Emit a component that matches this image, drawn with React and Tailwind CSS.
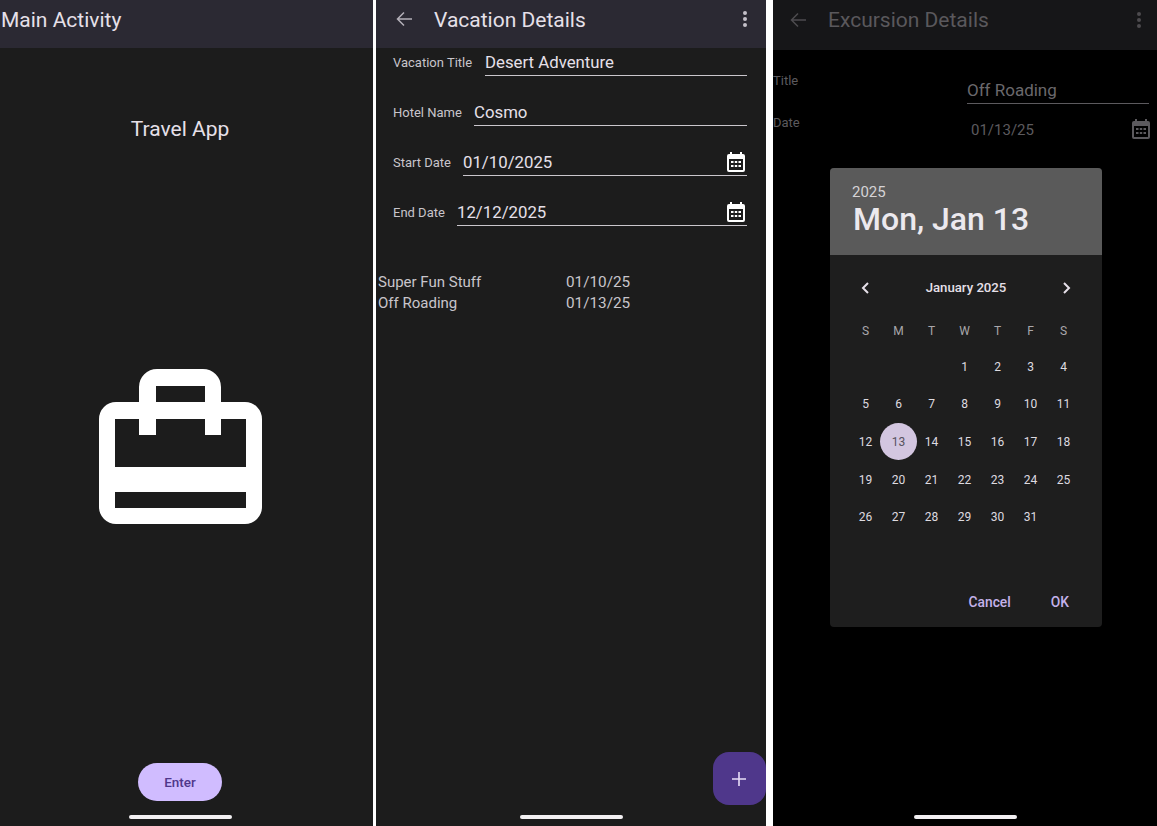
import React from "react";

const font = { fontFamily: "Roboto, sans-serif" };

function Briefcase() {
  return (
    <svg width="164" height="156" viewBox="0 0 164 156" className="block">
      <path
        fillRule="evenodd"
        fill="#ffffff"
        d="M58 0H104A18 18 0 0 1 122 18V33H146A17 17 0 0 1 163 50V138A17 17 0 0 1 146 155H17A17 17 0 0 1 0 138V50A17 17 0 0 1 17 33H40V18A18 18 0 0 1 58 0ZM57 17V33H106V17ZM16 50V98H147V50H122V66H106V50H57V66H40V50ZM16 123V139H147V123Z"
      />
    </svg>
  );
}

function CalendarIcon({ color = "#ffffff", className = "" }) {
  return (
    <svg width="18" height="20" viewBox="0 0 18 20" className={className}>
      <path
        fill={color}
        fillRule="evenodd"
        d="M3 0H5V2H13V0H15V2H16A2 2 0 0 1 18 4V18A2 2 0 0 1 16 20H2A2 2 0 0 1 0 18V4A2 2 0 0 1 2 2H3ZM2 7V18H16V7ZM4 9H6.500V11H4ZM7.800 9H10.200V11H7.800ZM11.500 9H14V11H11.500ZM4 13H6.500V15H4ZM7.800 13H10.200V15H7.800ZM11.500 13H14V15H11.500Z"
      />
    </svg>
  );
}

function BackArrow({ color }) {
  return (
    <svg width="16" height="16" viewBox="0 0 16 16" className="block">
      <path d="M16 8H2M8 1.500L1.500 8L8 14.500" fill="none" stroke={color} strokeWidth="1.500" />
    </svg>
  );
}

function Dots({ color }) {
  return (
    <svg width="4" height="16" viewBox="0 0 4 16" className="block">
      <circle cx="2" cy="2" r="2" fill={color} />
      <circle cx="2" cy="8" r="2" fill={color} />
      <circle cx="2" cy="14" r="2" fill={color} />
    </svg>
  );
}

function HomeBar() {
  return <div className="h-[4px] w-[103px] rounded-full bg-[#f2f0f2]" />;
}

function Field({ label, value, labelW, top, icon }) {
  return (
    <div className={`flex items-start pl-[17px] pr-[19px] ${top}`}>
      <span className={`text-[13px] leading-[30px] text-[#c8c5cb] shrink-0 ${labelW}`}>{label}</span>
      <div className="flex-1 h-[28px] border-b border-[#cac6cc] flex items-center justify-between">
        <span className="text-[16.800px] leading-[26px] text-[#e6e0e9]">{value}</span>
        {icon && <CalendarIcon className="mr-[2px]" />}
      </div>
    </div>
  );
}

const rows = [
  ["", "", "", "1", "2", "3", "4"],
  ["5", "6", "7", "8", "9", "10", "11"],
  ["12", "13", "14", "15", "16", "17", "18"],
  ["19", "20", "21", "22", "23", "24", "25"],
  ["26", "27", "28", "29", "30", "31", ""],
];

export default function App() {
  return (
    <div className="flex w-[1157px] h-[826px] overflow-hidden bg-white" style={font}>
      {/* Panel 1 */}
      <section className="w-[373px] h-full bg-[#1c1c1c] flex flex-col items-center">
        <header className="w-full h-[48px] bg-[#2b2933] pl-[1px] pb-[8px] flex items-center shrink-0">
          <span className="text-[21px] leading-[40px] text-[#e6e0e9]">Main Activity</span>
        </header>
        <h1 className="mt-[66px] text-[21px] leading-[30px] text-[#e6e0e9] font-normal ml-[-13px]">Travel App</h1>
        <div className="mt-[225px] ml-[-12px]">
          <Briefcase />
        </div>
        <button className="mt-[238px] ml-[-13px] w-[84px] h-[38px] rounded-full bg-[#d0bcff] text-[13.500px] font-medium text-[#4f378b]">
          Enter
        </button>
        <div className="mt-[14px] ml-[-13px]">
          <HomeBar />
        </div>
      </section>

      <div className="w-[3px]" />

      {/* Panel 2 */}
      <section className="w-[390px] h-full bg-[#1c1c1c] flex flex-col">
        <header className="h-[48px] bg-[#2b2933] flex items-center pl-[20px] pr-[19px] pb-[8px] shrink-0">
          <span className="mb-[3px]">
            <BackArrow color="#b4b0b9" />
          </span>
          <span className="ml-[22px] text-[21px] leading-[40px] text-[#e6e0e9]">Vacation Details</span>
          <span className="ml-auto mb-[3px]">
            <Dots color="#c4c0c9" />
          </span>
        </header>
        <Field label="Vacation Title" value="Desert Adventure" labelW="w-[92px]" top="mt-[0px]" />
        <Field label="Hotel Name" value="Cosmo" labelW="w-[81px]" top="mt-[20px]" />
        <Field label="Start Date" value="01/10/2025" labelW="w-[70px]" top="mt-[20px]" icon />
        <Field label="End Date" value="12/12/2025" labelW="w-[64px]" top="mt-[20px]" icon />
        <div className="mt-[44px] pl-[2px] text-[15px] leading-[20.500px] text-[#c8c5cb]">
          <div className="flex">
            <span className="w-[188px]">Super Fun Stuff</span>
            <span className="text-[15.300px]">01/10/25</span>
          </div>
          <div className="flex">
            <span className="w-[188px]">Off Roading</span>
            <span className="text-[15.300px]">01/13/25</span>
          </div>
        </div>
        <div className="flex-1" />
        <div className="flex justify-end">
          <button className="w-[53px] h-[53px] rounded-[16px] bg-[#4f378b] pr-[1px] flex items-center justify-center">
            <svg width="14" height="14" viewBox="0 0 14 14">
              <path d="M7 0V14M0 7H14" stroke="#e8def8" strokeWidth="1.600" />
            </svg>
          </button>
        </div>
        <div className="flex justify-center mt-[10px] mb-[7px]">
          <HomeBar />
        </div>
      </section>

      <div className="w-[7px]" />

      {/* Panel 3 */}
      <section className="w-[384px] h-full bg-black flex flex-col text-[#6f6d72]">
        <header className="h-[50px] bg-[#161618] flex items-center pl-[17px] pr-[16px] pb-[10px] shrink-0">
          <BackArrow color="#4d4b4f" />
          <span className="ml-[22px] text-[21px] leading-[40px] text-[#5a585c]">Excursion Details</span>
          <span className="ml-auto">
            <Dots color="#4d4b4f" />
          </span>
        </header>
        <div className="flex items-start mt-[20px]">
          <span className="w-[194px] mt-[1px] text-[13px] leading-[20px] text-[#5c5a5e]">Title</span>
          <div className="w-[182px] mt-[6px] h-[28px] border-b border-[#5c5a5e] text-[17px] leading-[28px] text-[#6a686c]">
            Off Roading
          </div>
        </div>
        <div className="flex items-start mt-[9px]">
          <span className="w-[198px] text-[13px] leading-[20px] text-[#5c5a5e]">Date</span>
          <span className="w-[161px] mt-[6px] text-[15px] leading-[22px] text-[#5c5a5e]">01/13/25</span>
          <CalendarIcon color="#5c5a5e" className="mt-[6px]" />
        </div>

        {/* Date picker */}
        <div className="mt-[27px] ml-[57px] w-[272px] h-[459px] rounded-[4px] overflow-hidden bg-[#1e1e1e] flex flex-col">
          <div className="h-[87px] bg-[#5a5a5a] pl-[22px] pt-[15px] shrink-0">
            <div className="text-[15px] leading-[18px] text-[#d5d3d6]">2025</div>
            <div className="pl-[1px] text-[32px] leading-[36px] font-medium text-[#ece9ee]">Mon, Jan 13</div>
          </div>
          <div className="flex items-center h-[24px] mt-[21px] pl-[31px] pr-[31px]">
            <svg width="8" height="12" viewBox="0 0 8 12">
              <path d="M7 1L2 6L7 11" fill="none" stroke="#e6e0e9" strokeWidth="2" />
            </svg>
            <span className="flex-1 text-center text-[13.200px] font-medium text-[#e6e0e9]">January 2025</span>
            <svg width="8" height="12" viewBox="0 0 8 12">
              <path d="M1 1L6 6L1 11" fill="none" stroke="#e6e0e9" strokeWidth="2" />
            </svg>
          </div>
          <div className="grid grid-cols-[repeat(7,33px)] px-[19px] mt-[21px] h-[20px] text-[12px] leading-[20px] text-center text-[#a9a7ab]">
            {["S", "M", "T", "W", "T", "F", "S"].map((d, i) => (
              <span key={i}>{d}</span>
            ))}
          </div>
          <div className="grid grid-cols-[repeat(7,33px)] auto-rows-[37.600px] px-[19px] mt-[7px] text-[12px] text-center text-[#dedbe0]">
            {rows.flat().map((d, i) => (
              <div key={i} className="flex items-center justify-center">
                {d === "13" ? (
                  <span className="w-[37px] h-[37px] shrink-0 rounded-full bg-[#d3c6e0] text-[#57525e] flex items-center justify-center">
                    13
                  </span>
                ) : (
                  d
                )}
              </div>
            ))}
          </div>
          <div className="mt-auto mb-[16px] flex justify-end gap-[40px] pr-[33px] text-[13.800px] leading-[18px] font-medium text-[#c4b2ea]">
            <span>Cancel</span>
            <span>OK</span>
          </div>
        </div>
        <div className="flex justify-center mt-[188px] ml-[1px]">
          <HomeBar />
        </div>
      </section>
    </div>
  );
}
